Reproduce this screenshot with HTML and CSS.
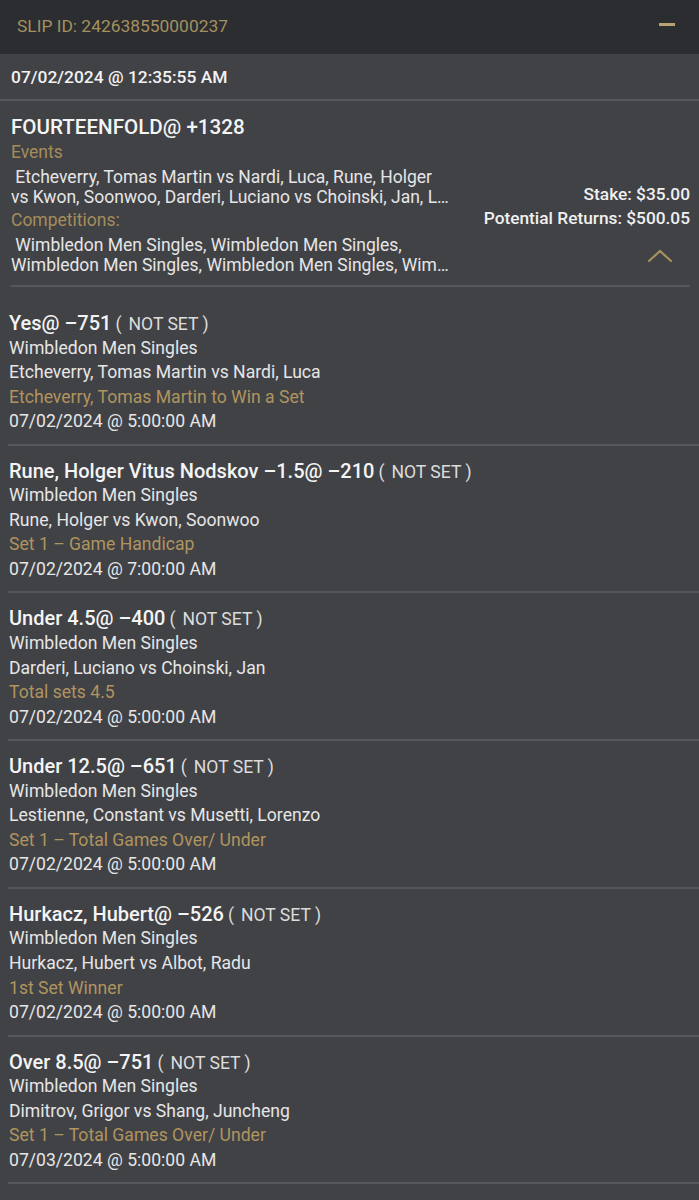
FILE: index.html
```html
<!DOCTYPE html>
<html lang="en">
<head>
  <meta charset="UTF-8">
  <meta name="viewport" content="width=device-width, initial-scale=1.0">
  <title>Bet Slip</title>
  <link rel="stylesheet" href="styles.css">
</head>
<body>
  <!-- Slip header -->
  <header class="slip-head">
    <span class="slip-id">SLIP ID: 242638550000237</span>
    <span class="collapse-btn"></span>
  </header>

  <div class="slip-date">07/02/2024 @ 12:35:55 AM</div>

  <!-- Summary -->
  <section class="summary">
    <div class="summary-inner">
      <div class="summary-left">
        <div class="summary-title">FOURTEENFOLD@ +1328</div>
        <div class="label">Events</div>
        <div class="lines">
          <div>&nbsp;Etcheverry, Tomas Martin vs Nardi, Luca, Rune, Holger</div>
          <div class="cut">vs Kwon, Soonwoo, Darderi, Luciano vs Choinski, Jan, Lestienne, Constant vs Musetti, Lorenzo, Hurkacz, Hubert vs Albot, Radu</div>
        </div>
        <div class="label">Competitions:</div>
        <div class="lines">
          <div>&nbsp;Wimbledon Men Singles, Wimbledon Men Singles,</div>
          <div class="cut">Wimbledon Men Singles, Wimbledon Men Singles, Wimbledon Men Singles, Wimbledon Men Singles</div>
        </div>
      </div>
      <div class="summary-right">
        <div>Stake: $35.00</div>
        <div>Potential Returns: $500.05</div>
        <svg class="chevron" width="26" height="14" viewBox="0 0 26 14">
          <path d="M2 12 L13 2 L24 12" fill="none" stroke="#a88f5f" stroke-width="2.2" stroke-linecap="round"/>
        </svg>
      </div>
    </div>
  </section>

  <!-- Bets -->
  <div class="bets">
    <div class="bet">
      <div class="bet-title">Yes@ –751<span class="status"><span class="paren-l">(</span>NOT SET<span class="paren-r">)</span></span></div>
      <div>Wimbledon Men Singles</div>
      <div>Etcheverry, Tomas Martin vs Nardi, Luca</div>
      <div class="market">Etcheverry, Tomas Martin to Win a Set</div>
      <div>07/02/2024 @ 5:00:00 AM</div>
    </div>
    <div class="bet">
      <div class="bet-title">Rune, Holger Vitus Nodskov –1.5@ –210<span class="status"><span class="paren-l">(</span>NOT SET<span class="paren-r">)</span></span></div>
      <div>Wimbledon Men Singles</div>
      <div>Rune, Holger vs Kwon, Soonwoo</div>
      <div class="market">Set 1 – Game Handicap</div>
      <div>07/02/2024 @ 7:00:00 AM</div>
    </div>
    <div class="bet">
      <div class="bet-title">Under 4.5@ –400<span class="status"><span class="paren-l">(</span>NOT SET<span class="paren-r">)</span></span></div>
      <div>Wimbledon Men Singles</div>
      <div>Darderi, Luciano vs Choinski, Jan</div>
      <div class="market">Total sets 4.5</div>
      <div>07/02/2024 @ 5:00:00 AM</div>
    </div>
    <div class="bet">
      <div class="bet-title">Under 12.5@ –651<span class="status"><span class="paren-l">(</span>NOT SET<span class="paren-r">)</span></span></div>
      <div>Wimbledon Men Singles</div>
      <div>Lestienne, Constant vs Musetti, Lorenzo</div>
      <div class="market">Set 1 – Total Games Over/ Under</div>
      <div>07/02/2024 @ 5:00:00 AM</div>
    </div>
    <div class="bet">
      <div class="bet-title">Hurkacz, Hubert@ –526<span class="status"><span class="paren-l">(</span>NOT SET<span class="paren-r">)</span></span></div>
      <div>Wimbledon Men Singles</div>
      <div>Hurkacz, Hubert vs Albot, Radu</div>
      <div class="market">1st Set Winner</div>
      <div>07/02/2024 @ 5:00:00 AM</div>
    </div>
    <div class="bet">
      <div class="bet-title">Over 8.5@ –751<span class="status"><span class="paren-l">(</span>NOT SET<span class="paren-r">)</span></span></div>
      <div>Wimbledon Men Singles</div>
      <div>Dimitrov, Grigor vs Shang, Juncheng</div>
      <div class="market">Set 1 – Total Games Over/ Under</div>
      <div>07/03/2024 @ 5:00:00 AM</div>
    </div>
  </div>
</body>
</html>
```

FILE: styles.css
```css
body {
  font-family: Roboto, "Liberation Sans", sans-serif;
  margin: 0;
  padding: 0;
  background-color: #414246;
  color: #e6e6e6;
}

.slip-head {
  background-color: #2b2d30;
  height: 54px;
  padding: 0 24px 0 17px;
  display: flex;
  justify-content: space-between;
  align-items: center;
}

.slip-id {
  color: #a5915f;
  font-size: 17.4px;
  margin-top: -2px;
}

.collapse-btn {
  width: 16px;
  height: 3px;
  background-color: #b8a46f;
  margin-top: -5px;
}

.slip-date {
  height: 45px;
  line-height: 47px;
  padding-left: 11px;
  font-size: 17.4px;
  font-weight: 500;
  color: #f2f2f2;
  border-bottom: 2px solid #56575b;
}

.summary {
  padding: 13px 9px 0 11px;
}

.summary-inner {
  display: flex;
  justify-content: space-between;
  border-bottom: 2px solid #56575b;
  padding-bottom: 9px;
}

.summary-left {
  width: 446px;
  overflow: hidden;
}

.summary-title {
  font-size: 20.6px;
  font-weight: 500;
  line-height: 26px;
  color: #f4f4f4;
}

.label {
  color: #a68c5a;
  font-size: 17.5px;
  line-height: 24px;
}

.lines {
  font-size: 17.5px;
  line-height: 20px;
  padding: 3px 0 1px;
}

.cut {
  white-space: nowrap;
  overflow: hidden;
  text-overflow: ellipsis;
}

.summary-right {
  padding-top: 68px;
  display: flex;
  flex-direction: column;
  align-items: flex-end;
  font-size: 17.3px;
  font-weight: 500;
  line-height: 24px;
  color: #f0f0f0;
}

.chevron {
  margin-top: 19px;
  margin-right: 17px;
}

.bets {
  margin-top: 11px;
}

.bet {
  margin-left: 8px;
  padding: 13px 0 10px 1px;
  border-bottom: 2px solid #56575b;
  font-size: 17.6px;
  line-height: 24.55px;
}

.bet-title {
  font-size: 20px;
  font-weight: 500;
  color: #f4f4f4;
}

.status {
  font-size: 17.6px;
  line-height: 1;
  font-weight: 400;
  color: #dcdcdc;
  margin-left: 4px;
}

.paren-l {
  margin-right: 7px;
}

.paren-r {
  margin-left: 4px;
}

.market {
  color: #b0945f;
}
```
